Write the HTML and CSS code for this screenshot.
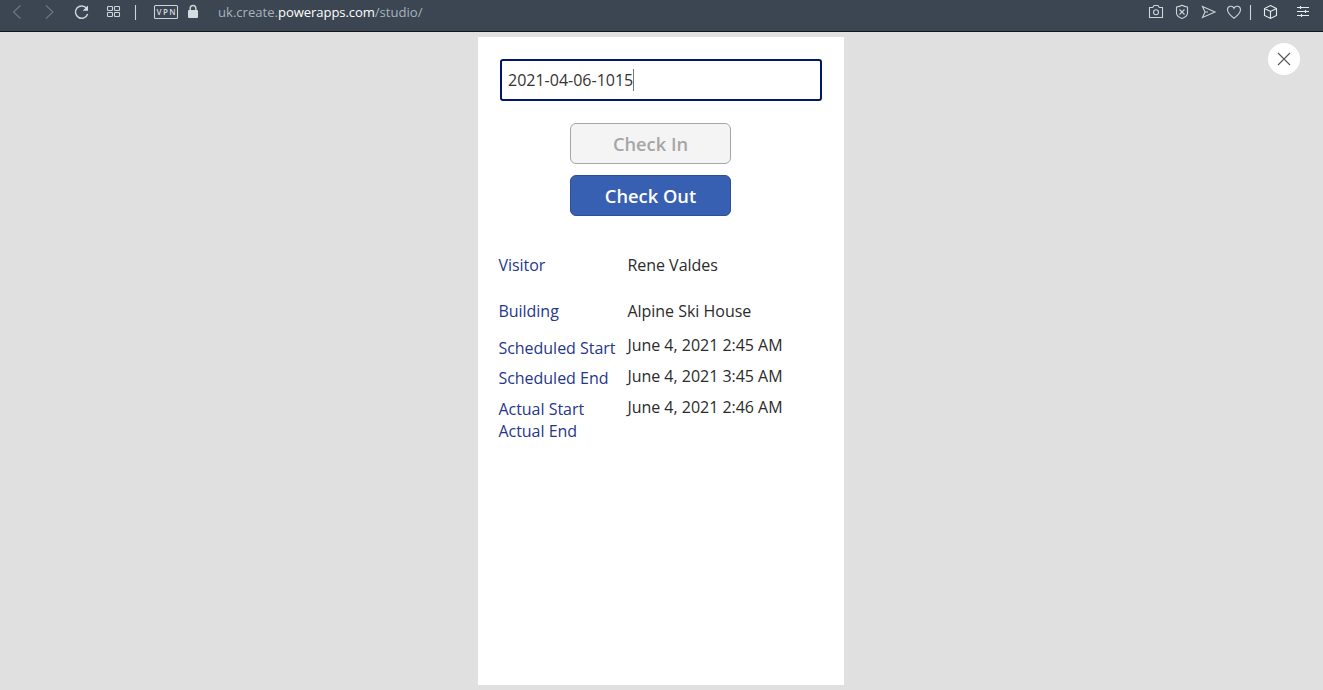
FILE: index.html
```html
<!DOCTYPE html>
<html lang="en">
<head>
<meta charset="utf-8">
<title>Visitor check-in</title>
<link rel="stylesheet" href="styles.css">
</head>
<body>
<header class="toolbar">
  <svg class="toolbar-icons" width="210" height="31" viewBox="0 0 210 31">
    <g class="dim"><path d="M20.500 5.500 13.500 12l7 6.500"/><path d="M46 5.500 53 12l-7 6.500"/></g>
    <path class="bold" d="M86.600 8.300A6.200 6.200 0 1 0 87.600 14"/>
    <path class="solid" d="M88 5.500v5.300h-5.300z"/>
    <g><rect x="107.500" y="6.500" width="5" height="4" rx=".7"/><rect x="114.500" y="6.500" width="5" height="4" rx=".7"/><rect x="107.500" y="12.500" width="5" height="4" rx=".7"/><rect x="114.500" y="12.500" width="5" height="4" rx=".7"/></g>
    <path d="M135.500 5v15"/>
    <rect x="154.500" y="5.500" width="23" height="13" rx="1"/>
    <text class="vpn" x="156.500" y="15" textLength="19">VPN</text>
    <path class="bold" d="M190.200 11V8.300a2.800 2.800 0 0 1 5.600 0V11"/>
    <rect class="solid" x="188" y="10" width="10" height="8" rx="1"/>
  </svg>
  <div class="url">uk.create.<span class="host">powerapps.com</span>/studio/</div>
  <svg class="toolbar-icons actions" width="193" height="31" viewBox="1130 0 193 31">
    <path d="M1149.500 7.500h3.200l1.300-2h4l1.300 2h3.200v10h-13z"/><circle cx="1156" cy="12.300" r="2.500"/>
    <path d="M1176.500 7q3-.2 5.500-1.700 2.500 1.500 5.500 1.700v6q0 3.500-5.500 5.500-5.500-2-5.500-5.500z"/><path d="m1179.500 9.500 5 5m0-5-5 5"/>
    <path d="M1202.500 6.500 1215 12l-12.500 5.500 2.500-5.500zM1205 12h3"/>
    <path d="M1234 18.300c-3-2.300-6.500-5-6.500-8.500 0-4 5-4.800 6.500-1.500 1.500-3.300 6.500-2.500 6.500 1.500 0 3.500-3.500 6.200-6.500 8.500z"/>
    <path d="M1250.500 5v15"/>
    <path class="bright" d="m1270.500 5.500 6 3v7l-6 3-6-3v-7zM1264.500 8.500l6 3 6-3M1270.500 11.500v7"/>
    <path class="bright" d="M1297 7.500h12M1297 11.500h12M1297 15.500h12M1300.500 6v3M1305.500 10v3M1301.500 14v3"/>
  </svg>
</header>
<main class="stage">
  <section class="phone">
    <div class="field"><span>2021-04-06-1015</span><i class="caret"></i></div>
    <div class="buttons">
      <button class="btn disabled" disabled>Check In</button>
      <button class="btn primary">Check Out</button>
    </div>
    <div class="details">
      <div class="column labels">
        <div class="tall">Visitor</div>
        <div class="building">Building</div>
        <div class="start">Scheduled Start</div>
        <div class="end">Scheduled End</div>
        <div class="actual">Actual Start</div>
        <div>Actual End</div>
      </div>
      <div class="column values">
        <div class="tall">Rene Valdes</div>
        <div class="house">Alpine Ski House</div>
        <div class="date">June 4, 2021 2:45 AM</div>
        <div class="date">June 4, 2021 3:45 AM</div>
        <div class="date">June 4, 2021 2:46 AM</div>
      </div>
    </div>
  </section>
  <button class="close" aria-label="Close">
    <svg width="32" height="32" viewBox="0 0 32 32"><path d="m10 10 12 12M22 10 10 22"/></svg>
  </button>
</main>
</body>
</html>
```
FILE: styles.css
```css
* { box-sizing: border-box; }
body {
  margin: 0;
  height: 690px;
  overflow: hidden;
  background: #e0e0e0;
  font: 16px/22px "Open Sans", sans-serif;
  display: flex;
  flex-direction: column;
}
.toolbar {
  height: 32px;
  flex: none;
  display: flex;
  background: #3b4652;
  border-bottom: 1px solid #12171c;
}
.toolbar-icons { flex: none; fill: none; stroke: #cbd4d9; stroke-width: 1.1; }
.toolbar-icons .dim { stroke: #6c7984; }
.toolbar-icons .bold { stroke-width: 1.5; }
.toolbar-icons .solid { fill: #d5dcdf; stroke: none; }
.toolbar-icons .bright { stroke: #e6edf0; }
.toolbar-icons .vpn { fill: #d5dcdf; stroke: none; font: 600 8px "Open Sans", sans-serif; }
.url {
  margin-left: 8px;
  padding-top: 3px;
  height: 31px;
  font-size: 13.1px;
  line-height: 19px;
  white-space: nowrap;
  color: #a6b3be;
}
.host { color: #fff; letter-spacing: -0.1px; }
.actions { margin-left: auto; }
.stage {
  position: relative;
  flex: 1;
  display: flex;
  justify-content: center;
  padding: 5px 1px 5px 0;
}
.phone {
  width: 366px;
  height: 648px;
  padding: 22px 22px 0;
  background: #fff;
}
.field {
  width: 322px;
  height: 42px;
  display: flex;
  align-items: center;
  padding: 0 0 1px 6px;
  border: 2px solid #001670;
  border-radius: 3px;
  color: #333;
}
.caret { width: 1px; height: 22px; background: #777; }
.buttons {
  display: flex;
  flex-direction: column;
  gap: 11px;
  width: 161px;
  margin: 22px 0 0 70px;
}
.btn {
  height: 41px;
  padding: 0;
  border-radius: 6px;
  font: 600 18.3px/24px "Open Sans", sans-serif;
}
.disabled { background: #f4f4f4; border: 1px solid #a6a6a6; color: #a6a6a6; }
.primary { background: #3860b2; border: 1px solid #2d4f97; color: #fff; }
.details { display: flex; margin: 38px 0 0 -1.6px; letter-spacing: -0.02px; }
.column { white-space: nowrap; }
.labels { width: 129px; color: #26378b; }
.values { color: #2b2b2b; }
.tall { height: 46px; }
.building { height: 37px; }
.start { height: 30px; }
.end { height: 31px; }
.actual { height: 22px; }
.house { height: 34px; }
.date { height: 31px; }
.close {
  position: absolute;
  right: 23px;
  top: 11px;
  width: 32px;
  height: 32px;
  padding: 0;
  border: 0;
  border-radius: 50%;
  background: #fff;
}
.close svg { display: block; stroke: #555; stroke-width: 1.1; }
```
